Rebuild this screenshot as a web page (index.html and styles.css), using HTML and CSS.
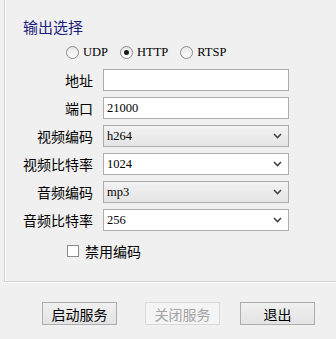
FILE: index.html
```html
<!DOCTYPE html>
<html>
<head>
<meta charset="utf-8">
<link rel="stylesheet" href="styles.css">
</head>
<body>
<div class="group">
  <div class="group-title">输出选择</div>
  <div class="radios">
    <label class="radio"><span class="radio-dot"></span><span class="mono">UDP</span></label>
    <label class="radio"><span class="radio-dot checked"></span><span class="mono">HTTP</span></label>
    <label class="radio"><span class="radio-dot"></span><span class="mono">RTSP</span></label>
  </div>
  <div class="form">
    <div class="label">地址</div>
    <div class="field input"></div>
    <div class="label">端口</div>
    <div class="field input"><span class="mono">21000</span></div>
    <div class="label">视频编码</div>
    <div class="field combo fixed"><span class="mono">h264</span><svg class="chev" width="9" height="6" viewBox="0 0 9 6"><path d="M1 1 L4.5 4.5 L8 1" fill="none" stroke="#444" stroke-width="1.6"/></svg></div>
    <div class="label">视频比特率</div>
    <div class="field combo"><span class="mono">1024</span><svg class="chev" width="9" height="6" viewBox="0 0 9 6"><path d="M1 1 L4.5 4.5 L8 1" fill="none" stroke="#444" stroke-width="1.6"/></svg></div>
    <div class="label">音频编码</div>
    <div class="field combo fixed"><span class="mono">mp3</span><svg class="chev" width="9" height="6" viewBox="0 0 9 6"><path d="M1 1 L4.5 4.5 L8 1" fill="none" stroke="#444" stroke-width="1.6"/></svg></div>
    <div class="label">音频比特率</div>
    <div class="field combo"><span class="mono">256</span><svg class="chev" width="9" height="6" viewBox="0 0 9 6"><path d="M1 1 L4.5 4.5 L8 1" fill="none" stroke="#444" stroke-width="1.6"/></svg></div>
  </div>
  <label class="check"><span class="box"></span><span>禁用编码</span></label>
</div>
<div class="buttons">
  <button class="btn">启动服务</button>
  <button class="btn disabled second">关闭服务</button>
  <button class="btn third">退出</button>
</div>
</body>
</html>
```

FILE: styles.css
```css
html, body {
  margin: 0;
  padding: 0;
  background: #f0f0f0;
  font-family: "Noto Sans CJK SC", sans-serif;
  font-size: 14px;
  color: #000;
  width: 336px;
  height: 339px;
  overflow: hidden;
}

.group {
  margin-left: 4px;
  width: 340px;
  border-left: 1px solid #d5d5d5;
  border-bottom: 1px solid #d5d5d5;
  box-shadow: inset 1px 0 0 #fff, 0 1px 0 #fff;
  padding-top: 17px;
  padding-bottom: 21px;
  box-sizing: content-box;
  height: 243px;
}

.group-title {
  margin-left: 18px;
  height: 20px;
  line-height: 20px;
  font-size: 15px;
  color: #1b1b7e;
}

.mono {
  font-family: "Liberation Serif", serif;
  font-size: 12.5px;
}

.radios {
  margin-top: 7px;
  margin-left: 61px;
  height: 17px;
  display: flex;
  align-items: center;
  gap: 12px;
}

.radio {
  display: flex;
  align-items: center;
  gap: 4px;
}

.radio-dot {
  width: 11px;
  height: 11px;
  border: 1px solid #8a8a8a;
  border-radius: 50%;
  background: linear-gradient(#e6e6e6, #ffffff);
  display: flex;
  align-items: center;
  justify-content: center;
}

.radio-dot.checked::after {
  content: "";
  width: 5px;
  height: 5px;
  border-radius: 50%;
  background: #1a1a1a;
}

.form {
  margin-top: 8px;
  display: grid;
  grid-template-columns: 88px 186px;
  column-gap: 10px;
  row-gap: 6px;
  grid-auto-rows: 22px;
}

.label {
  text-align: right;
  line-height: 22px;
  white-space: nowrap;
}

.field {
  box-sizing: border-box;
  border: 1px solid #adadad;
  background: #fff;
  display: flex;
  align-items: center;
  padding-left: 3px;
  padding-right: 6px;
}

.combo {
  justify-content: space-between;
}

.combo.fixed {
  background: linear-gradient(#f2f2f2, #e4e4e4);
}

.chev {
  display: block;
}

.check {
  margin-top: 11px;
  margin-left: 62px;
  height: 18px;
  display: flex;
  align-items: center;
  gap: 6px;
}

.box {
  width: 10px;
  height: 10px;
  border: 1px solid #8a8a8a;
  background: #fff;
}

.buttons {
  margin-top: 20px;
  padding-left: 42px;
  display: flex;
}

.btn {
  width: 75px;
  height: 23px;
  box-sizing: border-box;
  border: 1px solid #adadad;
  background: linear-gradient(#f0f0f0, #e3e3e3);
  font-family: "Noto Sans CJK SC", sans-serif;
  font-size: 14px;
  color: #000;
  padding: 0;
  line-height: 20px;
}

.btn.disabled {
  border-color: #d9d9d9;
  background: #f4f4f4;
  color: #a3a3a3;
}

.second {
  margin-left: 28px;
}

.third {
  margin-left: 20px;
}
```
